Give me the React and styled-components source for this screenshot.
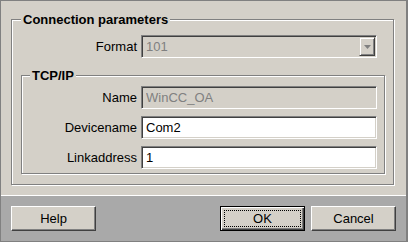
import React from "react";
import styled, { createGlobalStyle } from "styled-components";

const Global = createGlobalStyle`
  body {
    margin: 0;
    background: #d4d0c8;
    font-family: "Liberation Sans", Arial, sans-serif;
    font-size: 13px;
  }
`;

const Window = styled.div`
  width: 408px;
  height: 242px;
  box-sizing: border-box;
  border: 1px solid #808080;
  border-right-width: 2px;
  background: #d4d0c8;
  display: flex;
  flex-direction: column;
`;

const Main = styled.div`
  height: 194px;
  box-sizing: border-box;
  padding: 18px 12px 0 10px;
`;

const Group = styled.div`
  position: relative;
  box-sizing: border-box;
  height: ${(p) => p.$height}px;
  border: 1px solid #808080;
  box-shadow: inset 1px 1px 0 #fff, 1px 1px 0 #fff;
  padding: ${(p) => p.$padding};
  margin: ${(p) => p.$margin || 0};
`;

const Legend = styled.span`
  position: absolute;
  top: -7px;
  left: ${(p) => p.$left}px;
  padding: 0 2px;
  background: #d4d0c8;
  font-weight: bold;
  font-size: 13px;
  line-height: 13px;
  color: #000;
`;

const Rows = styled.div`
  display: flex;
  flex-direction: column;
  gap: 7px;
`;

const Row = styled.div`
  display: grid;
  grid-template-columns: ${(p) => p.$labelWidth}px 236px;
  column-gap: 4px;
  align-items: center;
`;

const Label = styled.label`
  text-align: right;
  color: #000;
  font-size: 13px;
  white-space: nowrap;
`;

const sunken = `
  box-sizing: border-box;
  height: 23px;
  border: 1px solid;
  border-color: #808080 #fff #fff #808080;
  box-shadow: inset 1px 1px 0 #404040, inset -1px -1px 0 #d4d0c8;
`;

const Input = styled.input`
  ${sunken}
  width: 236px;
  margin: 0;
  padding: 0 3px 0 4px;
  font-family: "Liberation Sans", Arial, sans-serif;
  font-size: 13px;
  outline: none;
  background: ${(p) => (p.disabled ? "#d4d0c8" : "#fff")};
  color: ${(p) => (p.disabled ? "#808080" : "#000")};
  -webkit-text-fill-color: ${(p) => (p.disabled ? "#808080" : "#000")};
  opacity: 1;
`;

const Combo = styled.div`
  ${sunken}
  width: 236px;
  display: flex;
  align-items: stretch;
  padding: 1px;
  background: #d4d0c8;
`;

const ComboValue = styled.span`
  flex: 1;
  display: flex;
  align-items: center;
  padding-left: 3px;
  color: #808080;
  font-size: 13px;
`;

const DropButton = styled.span`
  width: 16px;
  box-sizing: border-box;
  display: flex;
  align-items: center;
  justify-content: center;
  background: #d4d0c8;
  border: 1px solid;
  border-color: #d4d0c8 #404040 #404040 #d4d0c8;
  box-shadow: inset 1px 1px 0 #fff, inset -1px -1px 0 #808080;
`;

const Footer = styled.div`
  flex: 1;
  background: #a9a9a9;
  border-top: 1px solid #fff;
  display: flex;
  align-items: flex-start;
  padding: 10px 10px 0 10px;
`;

const Spacer = styled.div`
  flex: 1;
`;

const Button = styled.button`
  width: 85px;
  height: 25px;
  box-sizing: border-box;
  margin: 0 0 0 ${(p) => p.$gap || 0}px;
  padding: ${(p) => (p.$default ? "3px" : "0")};
  background: #d4d0c8;
  border: 1px solid;
  border-color: ${(p) => (p.$default ? "#000" : "#fff #404040 #404040 #fff")};
  box-shadow: ${(p) =>
    p.$default
      ? "inset 1px 1px 0 #fff, inset -1px -1px 0 #404040, inset -2px -2px 0 #808080"
      : "inset -1px -1px 0 #808080"};
  font-family: "Liberation Sans", Arial, sans-serif;
  font-size: 13px;
  color: #000;
  display: flex;
  align-items: center;
  justify-content: center;
`;

const Focus = styled.span`
  flex: 1;
  align-self: stretch;
  display: flex;
  align-items: center;
  justify-content: center;
  border: 1px dotted #000;
`;

function Arrow() {
  return (
    <svg width="7" height="4" viewBox="0 0 7 4">
      <path d="M0 0h7L3.5 4z" fill="#808080" />
    </svg>
  );
}

export default function App() {
  return (
    <>
      <Global />
      <Window>
        <Main>
          <Group $height={166} $padding="15px 8px 0 9px">
            <Legend $left={9}>Connection parameters</Legend>
            <Row $labelWidth={116}>
              <Label>Format</Label>
              <Combo>
                <ComboValue>101</ComboValue>
                <DropButton>
                  <Arrow />
                </DropButton>
              </Combo>
            </Row>
            <Group $padding="10px 0 4px 0" $margin="17px 0 0 0">
              <Legend $left={8}>TCP/IP</Legend>
              <Rows>
                <Row $labelWidth={115}>
                  <Label>Name</Label>
                  <Input disabled defaultValue="WinCC_OA" />
                </Row>
                <Row $labelWidth={115}>
                  <Label>Devicename</Label>
                  <Input defaultValue="Com2" />
                </Row>
                <Row $labelWidth={115}>
                  <Label>Linkaddress</Label>
                  <Input defaultValue="1" />
                </Row>
              </Rows>
            </Group>
          </Group>
        </Main>
        <Footer>
          <Button>Help</Button>
          <Spacer />
          <Button $default>
            <Focus>OK</Focus>
          </Button>
          <Button $gap={6}>Cancel</Button>
        </Footer>
      </Window>
    </>
  );
}
